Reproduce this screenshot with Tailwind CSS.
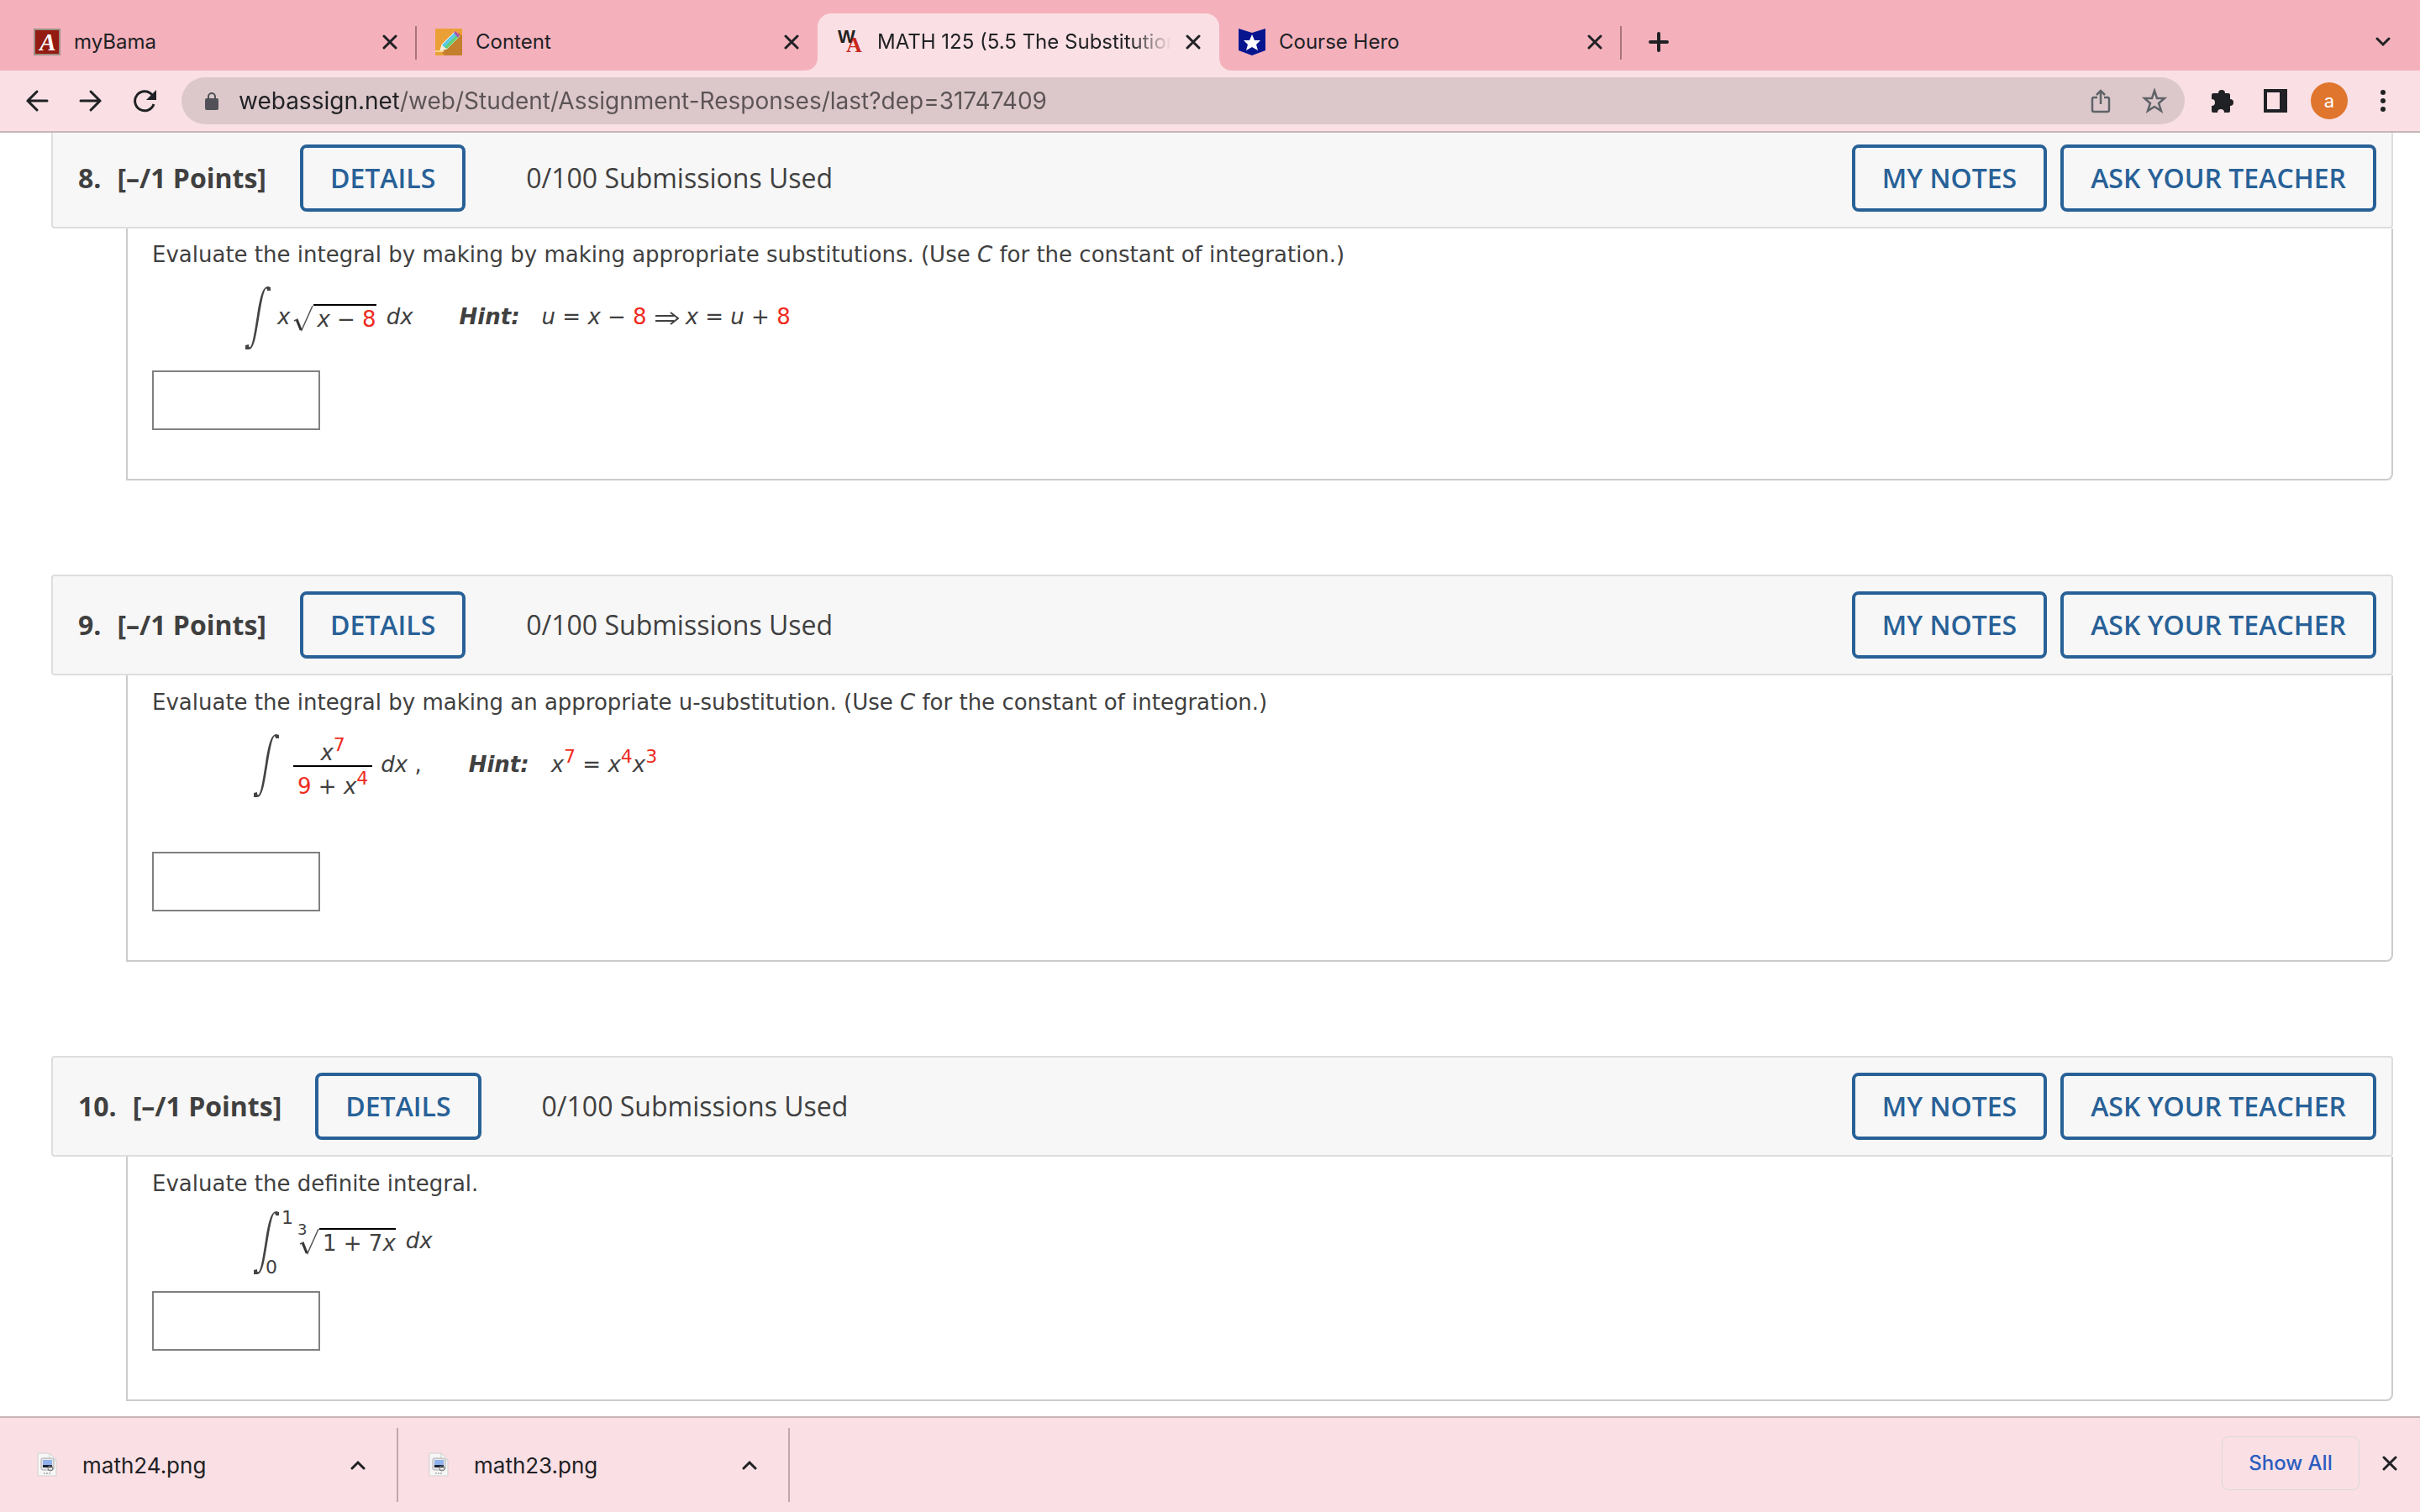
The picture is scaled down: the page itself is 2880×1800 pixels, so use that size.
<!DOCTYPE html>
<html lang="en">

<head>
    <meta charset="UTF-8" />
    <meta name="viewport" content="width=device-width, initial-scale=1.0" />
    <title>MATH 125 (5.5 The Substitution Rule)</title>
    <script src="https://cdn.jsdelivr.net/npm/@tailwindcss/browser@4"></script>
</head>

<body class="h-screen flex flex-col overflow-hidden bg-white font-['Inter',sans-serif] text-[#202124]">

    <!-- Shared shapes -->
    <svg class="hidden">
        <symbol id="close" viewBox="0 0 18 18">
            <path d="M2 2l14 14M16 2L2 16" fill="none" stroke="currentColor" stroke-width="3" stroke-linecap="round" />
        </symbol>
        <symbol id="integral" viewBox="0 0 30 75">
            <path d="M0 70l4-1c0 2 0 4 2 3c3-4 5-20 8-38C17 15 20 0 27 0l3 1v4l-4 0c0-2-1-3-2-2c-3 5-5 18-8 36C13 56 11 75 4 75H0z" fill="#444" />
        </symbol>
        <symbol id="radical" viewBox="0 0 24 32">
            <path d="M1 19l4-2 5 13L23 1" fill="none" stroke="#555" stroke-width="1.5" />
            <path d="M4 18l5 12" fill="none" stroke="#333" stroke-width="2.5" />
        </symbol>
        <symbol id="png" viewBox="0 0 24 30">
            <path d="M1 1h14l8 8v19H1z" fill="#f6f6f6" stroke="#d5cfd0" stroke-width="1" />
            <path d="M15 1v8h8z" fill="#fff" stroke="#ccc" stroke-width="1" />
            <rect x="5" y="7" width="15" height="14" rx="2" fill="#e8e8ea" stroke="#aaa" />
            <rect x="7" y="9" width="11" height="6" fill="#8fb2ec" />
            <path d="M7 15h11v3H7z" fill="#1c2433" />
            <circle cx="16" cy="19" r="3" fill="none" stroke="#777" />
            <path d="M8 25h9" stroke="#bbb" stroke-width="2" stroke-dasharray="2 1" />
        </symbol>
    </svg>

    <!-- Tab strip -->
    <nav class="flex h-[84px] shrink-0 items-end bg-[#f4b1bc] pl-[17px] pr-[35px] text-[24px]">
        <div class="flex h-[68px] w-[478px] items-center pl-[23px] pr-[22px]">
            <svg class="mr-4 size-8 shrink-0" viewBox="0 0 32 32">
                <rect x="1" y="1" width="30" height="30" fill="#941b12" stroke="#9b8f85" stroke-width="2" />
                <text x="17" y="26" text-anchor="middle" font-family="Liberation Serif" font-style="italic" font-weight="bold" font-size="29" fill="#fff">A</text>
            </svg>
            <a href="#" class="flex-1">myBama</a>
            <button aria-label="Close myBama"><svg class="size-[18px]"><use href="#close" /></svg></button>
        </div>
        <span class="mb-[13px] h-10 w-[2px] -mx-px bg-[#a8737d]"></span>
        <div class="flex h-[68px] w-[478px] items-center pl-[23px] pr-[22px]">
            <svg class="mr-4 size-8 shrink-0" viewBox="0 0 32 32">
                <path d="M0 0h32v32H0z" fill="#eb9f37" />
                <path d="M28 5l4 4v23H11L6 26z" fill="#c47f2c" />
                <path d="M0 26h10v2H0z" fill="#f7d38a" />
                <path d="M6 26l2-7L23 4l6 5-15 15z" fill="#5fc9e8" stroke="#fff" stroke-width="1" />
                <path d="M11 22L26 7l3 2-15 15z" fill="#62cf74" />
                <path d="M22 5l2-2 5 5-2 3z" fill="#a457b8" />
                <path d="M6 26l2-6 5 4z" fill="#fdf0d8" />
            </svg>
            <a href="#" class="flex-1">Content</a>
            <button aria-label="Close Content"><svg class="size-[18px]"><use href="#close" /></svg></button>
        </div>
        <div class="relative flex h-[68px] w-[478px] items-center rounded-t-2xl bg-[#fae0e4] pl-[23px] pr-[22px]">
            <svg class="absolute bottom-0 -left-4 size-4" viewBox="0 0 16 16"><path d="M16 0v16H0C10 16 16 10 16 0z" fill="#fae0e4" /></svg>
            <svg class="absolute bottom-0 -right-4 size-4" viewBox="0 0 16 16"><path d="M0 0v16h16C6 16 0 10 0 0z" fill="#fae0e4" /></svg>
            <svg class="mr-4 size-8 shrink-0" viewBox="0 0 32 32">
                <text x="1" y="17" font-family="Liberation Sans" font-weight="bold" font-size="22" fill="#222">W</text>
                <text x="11" y="28" font-family="Liberation Serif" font-weight="bold" font-size="26" fill="#c9271c">A</text>
            </svg>
            <a href="#" class="w-[350px] overflow-hidden whitespace-nowrap [mask-image:linear-gradient(to_right,black_86%,transparent)]">MATH 125 (5.5 The Substitution Rule)</a>
            <button class="ml-auto" aria-label="Close MATH 125"><svg class="size-[18px]"><use href="#close" /></svg></button>
        </div>
        <div class="flex h-[68px] w-[478px] items-center pl-[23px] pr-[22px]">
            <svg class="mr-4 size-8 shrink-0" viewBox="0 0 32 32">
                <path d="M0 0l16 5L32 0v26l-16 6L0 26z" fill="#07168f" />
                <path d="M16 7l3 7h7l-5 5 2 7-7-4-7 4 2-7-5-5h7z" fill="#fff" />
            </svg>
            <a href="#" class="flex-1">Course Hero</a>
            <button aria-label="Close Course Hero"><svg class="size-[18px]"><use href="#close" /></svg></button>
        </div>
        <span class="mb-[13px] h-10 w-[2px] -mx-px bg-[#a8737d]"></span>
        <div class="flex h-[68px] flex-1 items-center justify-between pl-[33px]">
            <button aria-label="New tab">
                <svg class="size-6" viewBox="0 0 24 24"><path d="M12 2v20M2 12h20" stroke="#202124" stroke-width="4" stroke-linecap="round" /></svg>
            </button>
            <button aria-label="Search tabs">
                <svg class="h-3 w-[18px]" viewBox="0 0 18 12"><path d="M2 2l7 7 7-7" fill="none" stroke="#202124" stroke-width="3" stroke-linecap="round" /></svg>
            </button>
        </div>
    </nav>

    <!-- Toolbar -->
    <div class="flex h-[74px] shrink-0 items-center border-b-2 border-[#c8b5b8] bg-[#fae0e4] pl-[30px] pr-[41px]">
        <button aria-label="Back" class="mr-9">
            <svg class="size-7" viewBox="0 0 28 28"><path d="M26 14H3M14 3L3 14l11 11" fill="none" stroke="#202124" stroke-width="3" stroke-linecap="round" /></svg>
        </button>
        <button aria-label="Forward" class="mr-9">
            <svg class="size-7" viewBox="0 0 28 28"><path d="M2 14h23M14 3l11 11-11 11" fill="none" stroke="#202124" stroke-width="3" stroke-linecap="round" /></svg>
        </button>
        <button aria-label="Reload" class="mr-[30px]">
            <svg class="size-7" viewBox="0 0 28 28">
                <path d="M25 18A11.500 11.500 0 1 1 23 7" fill="none" stroke="#202124" stroke-width="3" />
                <path d="M28 1v12H16z" fill="#202124" />
            </svg>
        </button>
        <div class="flex h-14 flex-1 items-center rounded-full bg-[#dcc8cb] pl-7 pr-[21px]">
            <svg class="mr-6 h-[22px] w-4 shrink-0" viewBox="0 0 16 22">
                <rect y="8" width="16" height="14" rx="2" fill="#505257" />
                <path d="M4 9V6a4 4 0 0 1 8 0v3" fill="none" stroke="#505257" stroke-width="2" />
            </svg>
            <input type="text" aria-label="Address" value="webassign.net/web/Student/Assignment-Responses/last?dep=31747409"
                class="min-w-0 flex-1 bg-[linear-gradient(to_right,#202124_190px,#5c5356_190px)] bg-clip-text text-[28px] text-transparent outline-none" />
            <button aria-label="Share" class="mr-[37px]">
                <svg class="h-[30px] w-6" viewBox="0 0 24 30"><path d="M8 11H4q-2 0-2 2v13q0 2 2 2h16q2 0 2-2V13q0-2-2-2h-4M12 19V3M7 8l5-5 5 5" fill="none" stroke="#5f6368" stroke-width="2.500" /></svg>
            </button>
            <button aria-label="Bookmark">
                <svg class="size-[30px]" viewBox="0 0 30 30"><path d="M15 3l3 9h9l-7 6 3 9-8-5-8 5 3-9-7-6h9z" fill="none" stroke="#5f6368" stroke-width="2.500" /></svg>
            </button>
        </div>
        <button aria-label="Extensions" class="ml-[30px]">
            <svg class="size-[30px]" viewBox="0 0 30 30"><path d="M4 6h6a4 4 0 1 1 8 0h4q2 0 2 2v5a4 4 0 1 1 0 8v6q0 2-2 2h-5a4 4 0 0 0-8 0H4q-2 0-2-2v-6a4 4 0 0 0 0-8V8q0-2 2-2z" fill="#202124" /></svg>
        </button>
        <button aria-label="Side panel" class="ml-[34px]">
            <svg class="size-7" viewBox="0 0 28 28"><path d="M0 0h28v28H0zM4 4v20h15V4z" fill="#202124" fill-rule="evenodd" /></svg>
        </button>
        <button aria-label="Profile" class="ml-7 size-11 rounded-full bg-[#e0752d] text-[22px] leading-[44px] text-white">a</button>
        <button aria-label="Menu" class="ml-[39px]">
            <svg class="h-7 w-[6px]" viewBox="0 0 6 28" fill="#202124"><circle cx="3" cy="4" r="3" /><circle cx="3" cy="14" r="3" /><circle cx="3" cy="24" r="3" /></svg>
        </button>
    </div>

    <!-- Assignment questions -->
    <main class="flex-1 overflow-hidden pl-[61px] pr-8 text-[#404040]">
        <section class="-mt-[6px] mb-28">
            <header class="flex items-center rounded border-2 border-[#dedede] bg-[#f7f7f7] py-[18px] pl-[30px] pr-[18px] font-['Open_Sans',sans-serif] text-[32px]">
                <h2 class="font-bold"><span class="mr-[19px]">8.</span>[–/1 Points]</h2>
                <button class="ml-10 h-20 rounded-lg border-4 border-[#286197] px-8 font-semibold text-[#286197]">DETAILS</button>
                <span class="ml-[72px] flex-1">0/100 Submissions Used</span>
                <button class="h-20 rounded-lg border-4 border-[#286197] px-8 font-semibold text-[#286197]">MY NOTES</button>
                <button class="ml-4 h-20 rounded-lg border-4 border-[#286197] px-8 font-semibold text-[#286197]">ASK YOUR TEACHER</button>
            </header>
            <div class="ml-[89px] rounded-br-lg border-2 border-t-0 border-[#ccc] pb-[58px] pl-[29px] pt-[11px] font-['DejaVu_Sans',sans-serif] text-[26px]">
                <label for="answer8" class="block leading-10">Evaluate the integral by making by making appropriate substitutions. (Use <i>C</i> for the constant of integration.)</label>
                <div class="mt-[18px] flex h-[75px] items-center whitespace-nowrap pl-[111px]">
                    <svg class="h-[75px] w-[30px]"><use href="#integral" /></svg>
                    <i class="ml-2 pb-[2px]">x</i>
                    <svg class="ml-1 h-8 w-6"><use href="#radical" /></svg>
                    <span class="border-t-2 border-black pl-1 leading-8"><i>x</i> − <span class="text-[#ee2c1f]">8</span></span>
                    <i class="ml-3 pb-[2px]">dx</i>
                    <b class="ml-[55px] pb-[2px] italic">Hint:</b>
                    <span class="ml-[26px] pb-[2px]"><i>u</i> = <i>x</i> − <span class="text-[#ee2c1f]">8</span></span>
                    <svg class="ml-[10px] mr-2 h-4 w-7" viewBox="0 0 28 16"><path d="M0 5h22M0 11h22M18 1l9 7-9 7" fill="none" stroke="#404040" stroke-width="2" /></svg>
                    <span class="pb-[2px]"><i>x</i> = <i>u</i> + <span class="text-[#ee2c1f]">8</span></span>
                </div>
                <input id="answer8" type="text" class="mt-[25px] block h-[71px] w-[200px] border-2 border-[#808080] bg-white px-2" />
            </div>
        </section>

        <section class="mb-28">
            <header class="flex items-center rounded border-2 border-[#dedede] bg-[#f7f7f7] py-[18px] pl-[30px] pr-[18px] font-['Open_Sans',sans-serif] text-[32px]">
                <h2 class="font-bold"><span class="mr-[19px]">9.</span>[–/1 Points]</h2>
                <button class="ml-10 h-20 rounded-lg border-4 border-[#286197] px-8 font-semibold text-[#286197]">DETAILS</button>
                <span class="ml-[72px] flex-1">0/100 Submissions Used</span>
                <button class="h-20 rounded-lg border-4 border-[#286197] px-8 font-semibold text-[#286197]">MY NOTES</button>
                <button class="ml-4 h-20 rounded-lg border-4 border-[#286197] px-8 font-semibold text-[#286197]">ASK YOUR TEACHER</button>
            </header>
            <div class="ml-[89px] rounded-br-lg border-2 border-t-0 border-[#ccc] pb-[58px] pl-[29px] pt-3 font-['DejaVu_Sans',sans-serif] text-[26px]">
                <label for="answer9" class="block leading-10">Evaluate the integral by making an appropriate u-substitution. (Use <i>C</i> for the constant of integration.)</label>
                <div class="mt-[18px] flex h-[75px] items-center whitespace-nowrap pl-[121px]">
                    <svg class="h-[75px] w-[30px]"><use href="#integral" /></svg>
                    <span class="ml-[17px] flex flex-col text-center leading-[30px]">
                        <span class="border-b-2 border-black pt-2"><i>x</i><sup class="text-[22px] text-[#ee2c1f]">7</sup></span>
                        <span class="px-[5px] pt-2"><span class="text-[#ee2c1f]">9</span> + <i>x</i><sup class="text-[22px] text-[#ee2c1f]">4</sup></span>
                    </span>
                    <span class="ml-[10px] pb-[2px]"><i>dx</i> ,</span>
                    <b class="ml-14 pb-[2px] italic">Hint:</b>
                    <span class="ml-[26px] pb-[2px]"><i>x</i><sup class="text-[22px] text-[#ee2c1f]">7</sup> = <i>x</i><sup class="text-[22px] text-[#ee2c1f]">4</sup><i>x</i><sup class="text-[22px] text-[#ee2c1f]">3</sup></span>
                </div>
                <input id="answer9" type="text" class="mt-[65px] block h-[71px] w-[200px] border-2 border-[#808080] bg-white px-2" />
            </div>
        </section>

        <section>
            <header class="flex items-center rounded border-2 border-[#dedede] bg-[#f7f7f7] py-[18px] pl-[30px] pr-[18px] font-['Open_Sans',sans-serif] text-[32px]">
                <h2 class="font-bold"><span class="mr-[19px]">10.</span>[–/1 Points]</h2>
                <button class="ml-10 h-20 rounded-lg border-4 border-[#286197] px-8 font-semibold text-[#286197]">DETAILS</button>
                <span class="ml-[72px] flex-1">0/100 Submissions Used</span>
                <button class="h-20 rounded-lg border-4 border-[#286197] px-8 font-semibold text-[#286197]">MY NOTES</button>
                <button class="ml-4 h-20 rounded-lg border-4 border-[#286197] px-8 font-semibold text-[#286197]">ASK YOUR TEACHER</button>
            </header>
            <div class="ml-[89px] rounded-br-lg border-2 border-t-0 border-[#ccc] pb-[58px] pl-[29px] pt-3 font-['DejaVu_Sans',sans-serif] text-[26px]">
                <label for="answer10" class="block leading-10">Evaluate the definite integral.</label>
                <div class="mt-[13px] flex h-[75px] items-center whitespace-nowrap pl-[121px]">
                    <div class="relative mr-6 h-[75px] w-[30px]">
                        <svg class="h-[75px] w-[30px]"><use href="#integral" /></svg>
                        <span class="absolute -top-1 left-[33px] text-[22px] leading-6">1</span>
                        <span class="absolute -bottom-1 left-[14px] text-[22px] leading-6">0</span>
                    </div>
                    <div class="relative mb-1 h-8 w-6">
                        <svg class="h-8 w-6"><use href="#radical" /></svg>
                        <span class="absolute -top-2 -left-[2px] text-[18px] leading-5">3</span>
                    </div>
                    <span class="mb-[2px] border-t-2 border-black pl-1 leading-8">1 + 7<i>x</i></span>
                    <i class="ml-3 pb-1">dx</i>
                </div>
                <input id="answer10" type="text" class="mt-5 block h-[71px] w-[200px] border-2 border-[#808080] bg-white px-2" />
            </div>
        </section>
    </main>

    <!-- Downloads bar -->
    <footer class="flex h-[114px] shrink-0 items-center border-t-2 border-[#c8b5b8] bg-[#fae0e4] pr-[27px] text-[26px]">
        <div class="flex h-[88px] w-[474px] items-center border-r-2 border-[#bfa9ad] pl-11 pr-[37px]">
            <svg class="h-[30px] w-6"><use href="#png" /></svg>
            <a href="#" class="ml-[30px] flex-1">math24.png</a>
            <button aria-label="Options for math24.png"><svg class="h-3 w-[18px]" viewBox="0 0 18 12"><path d="M2 10l7-7 7 7" fill="none" stroke="#202124" stroke-width="3" stroke-linecap="round" /></svg></button>
        </div>
        <div class="flex h-[88px] w-[466px] items-center border-r-2 border-[#bfa9ad] pl-9 pr-[37px]">
            <svg class="h-[30px] w-6"><use href="#png" /></svg>
            <a href="#" class="ml-[30px] flex-1">math23.png</a>
            <button aria-label="Options for math23.png"><svg class="h-3 w-[18px]" viewBox="0 0 18 12"><path d="M2 10l7-7 7 7" fill="none" stroke="#202124" stroke-width="3" stroke-linecap="round" /></svg></button>
        </div>
        <div class="mb-1 ml-auto flex items-center gap-[27px]">
            <button class="h-16 w-[164px] rounded-lg border border-[#d9d9dc] text-[24px] font-medium text-[#2a5cc0]">Show All</button>
            <button aria-label="Close downloads bar"><svg class="size-[18px]"><use href="#close" /></svg></button>
        </div>
    </footer>
</body>

</html>
